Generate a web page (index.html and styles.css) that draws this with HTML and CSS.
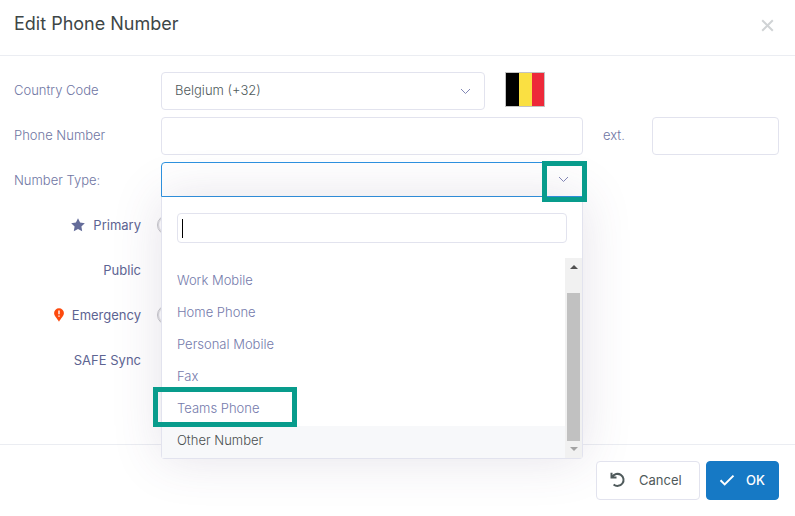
FILE: index.html
```
<!DOCTYPE html>
<html lang="en">
<head>
    <meta charset="UTF-8">
    <meta name="viewport" content="width=device-width, initial-scale=1.0">
    <title>Edit Phone Number</title>
    <link rel="stylesheet" href="styles.css">
</head>
<body>
    <form class="modal">
        <header class="modal-header">
            <h1>Edit Phone Number</h1>
            <button type="button" class="close" aria-label="Close">
                <svg width="13" height="13" viewBox="0 0 13 13"><path d="M1.200 1.200l10.600 10.600M11.800 1.200l-10.600 10.600"/></svg>
            </button>
        </header>

        <div class="modal-body">
            <div class="row">
                <label for="country">Country Code</label>
                <div class="field country-field">
                    <div class="select country">
                        <select id="country">
                            <option>Belgium (+32)</option>
                        </select>
                        <svg class="chevron" width="11" height="7" viewBox="0 0 11 7"><path d="M1 1l4.500 4.500L10 1"/></svg>
                    </div>
                    <svg class="flag" viewBox="0 0 38 33" preserveAspectRatio="none" role="img" aria-label="Belgium">
                        <rect width="13" height="33" fill="#000"/>
                        <rect x="13" width="13" height="33" fill="#fae042"/>
                        <rect x="26" width="12" height="33" fill="#ed2939"/>
                    </svg>
                </div>
            </div>

            <div class="row">
                <label for="phone">Phone Number</label>
                <input type="text" id="phone" class="field control">
                <label for="ext" class="ext-label">ext.</label>
                <input type="text" id="ext" class="control">
            </div>

            <div class="row">
                <label for="type">Number Type:</label>
                <div class="field select open">
                    <select id="type">
                        <option></option>
                    </select>
                    <svg class="chevron" width="11" height="7" viewBox="0 0 11 7"><path d="M1 1l4.500 4.500L10 1"/></svg>
                    <div class="dropdown">
                        <div class="search">
                            <input type="text" aria-label="Search number types">
                            <span class="caret"></span>
                        </div>
                        <div class="results">
                            <ul role="listbox" aria-label="Number types">
                                <li role="option">Work Mobile</li>
                                <li role="option">Home Phone</li>
                                <li role="option">Personal Mobile</li>
                                <li role="option">Fax</li>
                                <li role="option" class="marked">Teams Phone</li>
                                <li role="option" class="active" aria-selected="true">Other Number</li>
                            </ul>
                            <div class="scrollbar">
                                <span class="arrow up"></span>
                                <span class="thumb"></span>
                                <span class="arrow down"></span>
                            </div>
                        </div>
                    </div>
                    <span class="mark-toggle"></span>
                </div>
            </div>

            <div class="row toggle-row">
                <label for="primary">
                    <svg class="star" width="14" height="14" viewBox="0 0 14 14"><path d="M7 .2l2.100 4.300 4.700.7-3.400 3.300.8 4.800L7 11l-4.200 2.300.8-4.800L.2 5.200l4.700-.7z"/></svg>
                    Primary
                </label>
                <input type="checkbox" id="primary">
            </div>
            <div class="row toggle-row">
                <label for="public">Public</label>
                <input type="checkbox" id="public" class="on" checked>
            </div>
            <div class="row toggle-row">
                <label for="emergency">
                    <svg class="pin" width="10" height="14" viewBox="0 0 10 14"><path d="M5 .2a4.900 4.900 0 0 0-4.900 4.900C.1 8.200 3.200 10.500 5 13.800c1.800-3.300 4.900-5.600 4.900-8.700A4.900 4.900 0 0 0 5 .2z"/><path class="bang" d="M5 2.500v3.700M5 7.400v1.400"/></svg>
                    Emergency
                </label>
                <input type="checkbox" id="emergency">
            </div>
            <div class="row toggle-row">
                <label for="sync">SAFE Sync</label>
                <input type="checkbox" id="sync" class="on" checked>
            </div>
        </div>

        <footer class="modal-footer">
            <button type="button" class="btn">
                <svg width="16" height="16" viewBox="0 0 16 16"><path d="M1.500 .8v4.700h5M2.300 5A6 6 0 1 1 3.600 12.400"/></svg>
                Cancel
            </button>
            <button type="submit" class="btn btn-primary">
                <svg width="16" height="16" viewBox="0 0 16 16"><path d="M1.500 8.200l4.200 4.200 8.800-8.800"/></svg>
                OK
            </button>
        </footer>
    </form>
</body>
</html>
```
FILE: styles.css
```
*, *::after {
    box-sizing: border-box;
}
body {
    margin: 0;
    background: #fff;
    color: #6c7293;
    font-family: Inter, "Open Sans", sans-serif;
    font-size: 13px;
    font-weight: 300;
    line-height: 20px;
}
input, select, button {
    font: inherit;
    color: inherit;
}
svg path {
    fill: none;
    stroke: currentColor;
}
.modal-header {
    display: flex;
    justify-content: space-between;
    align-items: center;
    padding: 12px 21px 19px 14px;
    border-bottom: 1px solid #ebedf2;
}
.modal-header h1 {
    margin: 0;
    color: #3d4647;
    font-size: 18px;
    font-weight: 400;
    line-height: 24px;
}
.close {
    display: flex;
    padding: 3px 0 0;
    border: 0;
    background: none;
    color: #d0d3d5;
    cursor: pointer;
}
.close path {
    stroke-width: 2;
}
.modal-body {
    display: flex;
    flex-direction: column;
    gap: 7px;
    padding: 16px 16px 64px 14px;
}
.row {
    display: grid;
    grid-template-columns: 147px 1fr 69px 127px;
    align-items: center;
    min-height: 38px;
}
.row label {
    padding-bottom: 2px;
    color: #6f76a3;
}
.control {
    width: 100%;
    height: 38px;
    padding: 0 13px;
    border: 1px solid #e2e3ee;
    border-radius: 4px;
    background: #fff;
    outline: none;
}
.row .ext-label {
    padding-left: 20px;
}
.select {
    position: relative;
}
.select select {
    display: block;
    width: 100%;
    height: 38px;
    padding: 0 13px 2px;
    border: 1px solid #e2e3ee;
    border-radius: 4px;
    background: #fff;
    color: #4f5a5b;
    appearance: none;
    outline: none;
}
.chevron {
    position: absolute;
    top: 16px;
    right: 14px;
    color: #8186b5;
}
.country-field {
    display: flex;
    align-items: flex-start;
    gap: 20px;
}
.country {
    flex: 0 1 324px;
}
.flag {
    width: 40px;
    height: 35px;
    border: 1px solid #c3c3c3;
}
.open {
    align-self: start;
}
.open select {
    height: 35px;
    border-color: #2e92df;
    border-radius: 4px 4px 0 0;
}
.open .chevron {
    top: 14px;
    z-index: 3;
}
.dropdown {
    position: absolute;
    top: 100%;
    left: 0;
    right: 0;
    z-index: 2;
    border: 1px solid #e2e3ee;
    border-top: 0;
    border-radius: 0 0 4px 4px;
    background: #fff;
    box-shadow: 0 0 50px rgba(82, 63, 105, 0.15);
}
.search {
    position: relative;
    padding: 16px 15px 15px;
}
.search input {
    display: block;
    width: 100%;
    height: 30px;
    padding: 0 5px;
    border: 1px solid #e2e3ee;
    border-radius: 4px;
    outline: none;
}
.caret {
    position: absolute;
    top: 22px;
    left: 20px;
    width: 1px;
    height: 19px;
    background: #000;
}
.results {
    display: flex;
}
.results ul {
    flex: 1;
    margin: 0;
    padding: 8px 0 0;
    list-style: none;
}
.results li {
    position: relative;
    padding: 4px 15px 8px;
    color: #747aab;
}
.results .active {
    background: #f7f8fa;
    color: #4a4f50;
}
/* callouts */
.marked::after {
    content: "";
    position: absolute;
    top: -7px;
    left: -9px;
    z-index: 1;
    width: 144px;
    height: 40px;
    border: 5px solid #089c8c;
}
.mark-toggle {
    position: absolute;
    top: -1px;
    right: -4px;
    z-index: 3;
    width: 45px;
    height: 41px;
    border: 5px solid #089c8c;
}
.scrollbar {
    display: flex;
    flex-direction: column;
    align-items: center;
    width: 17px;
    padding: 7px 0;
    background: #f1f1f1;
}
.thumb {
    flex: 1;
    width: 13px;
    margin: 24px 0 6px;
    background: #c1c1c1;
}
.arrow {
    border: 4px solid transparent;
}
.up {
    border-top: 0;
    border-bottom-color: #505050;
}
.down {
    border-bottom: 0;
    border-top-color: #a3a3a3;
}
.toggle-row label {
    display: flex;
    justify-content: flex-end;
    align-items: center;
    gap: 8px;
    padding-right: 20px;
    color: #5d6492;
    font-weight: 400;
}
.star path {
    fill: #646c9a;
    stroke: none;
}
.pin path {
    fill: #fd4a0e;
    stroke: none;
}
.pin .bang {
    fill: none;
    stroke: #fff;
    stroke-width: 1.4;
}
.toggle-row input {
    width: 20px;
    height: 20px;
    margin: 0 0 2px -4px;
    border: 1px solid #c4c4c8;
    border-radius: 50%;
    background: #fff;
    box-shadow: inset 1px 0 1px #d8d8dc;
    appearance: none;
}
.toggle-row .on {
    margin-left: 16px;
}
.modal-footer {
    display: flex;
    justify-content: flex-end;
    gap: 6px;
    padding: 16px 16px 16px 14px;
    border-top: 1px solid #ebedf2;
}
.btn {
    position: relative;
    z-index: 3;
    display: flex;
    align-items: center;
    gap: 13px;
    min-width: 104px;
    height: 39px;
    padding: 0 13px 1px;
    border: 1px solid #e2e3ee;
    border-radius: 4px;
    background: #fff;
    color: #4f5a5b;
    font-weight: 400;
    cursor: pointer;
}
.btn path {
    stroke-width: 2;
}
.btn-primary {
    gap: 11px;
    min-width: 73px;
    padding: 0 12px 1px;
    border-color: #1679c5;
    background: #1679c5;
    color: #fff;
    font-weight: 500;
}
```
